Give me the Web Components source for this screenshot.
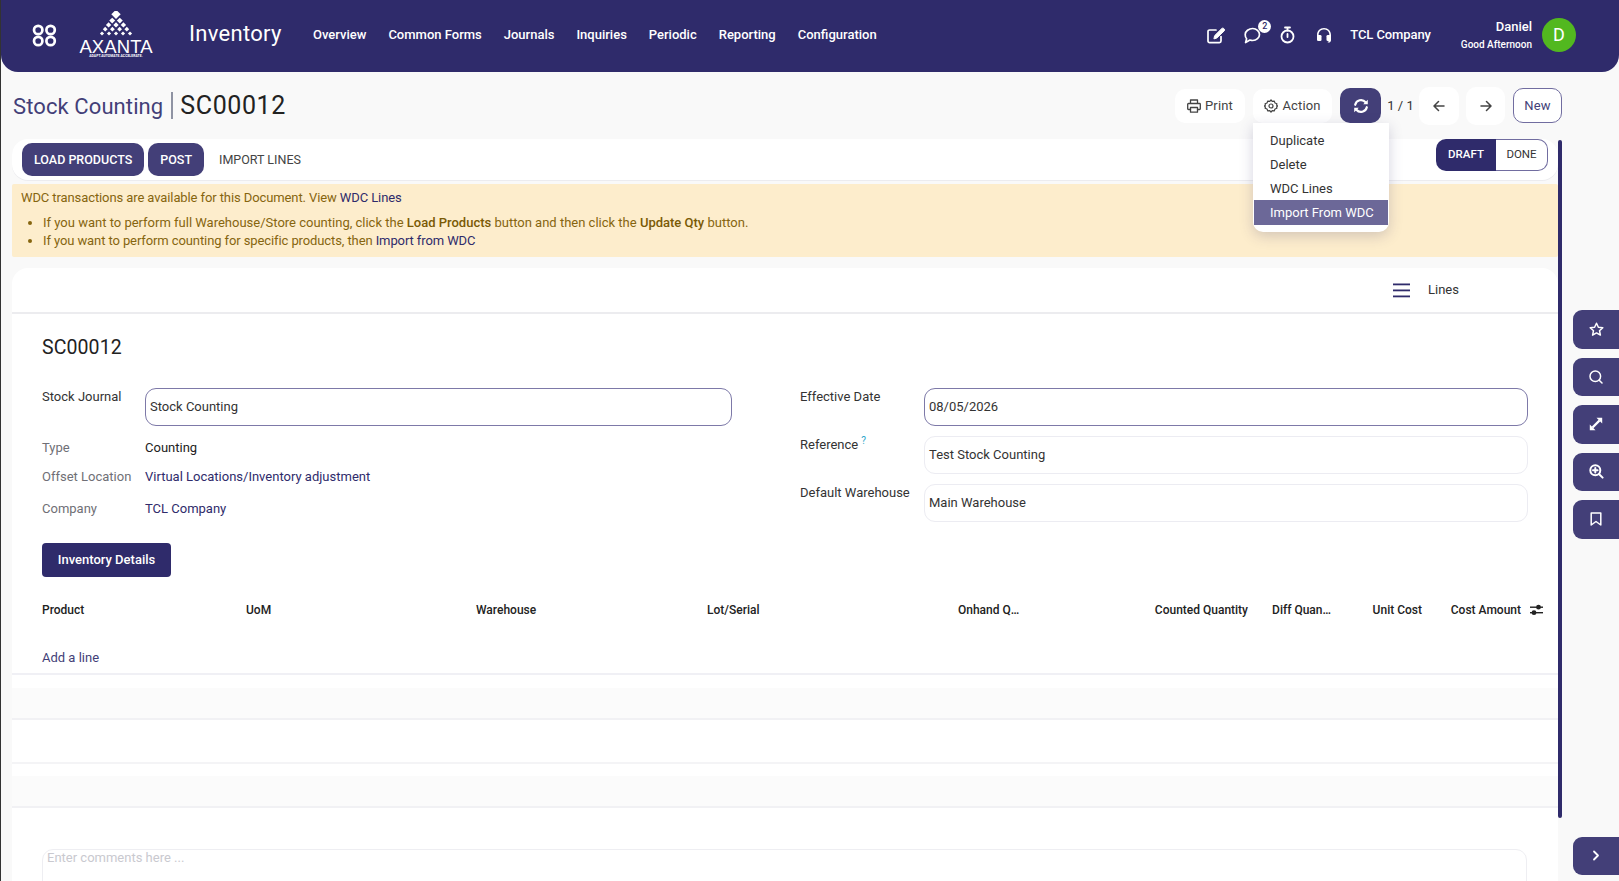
<!DOCTYPE html>
<html lang="en"><head><meta charset="utf-8"><title>Stock Counting</title>
<style>
html,body{margin:0;height:881px;overflow:hidden;background:#f9f9f9}
body{border-left:1px solid #333;font:13px/1.2 Roboto,"Liberation Sans",sans-serif;color:#222;box-sizing:border-box;width:1619px}
stock-app{display:block}
</style></head><body>
<stock-app></stock-app>
<script>
const S='fill="none" stroke="currentColor" stroke-linecap="round" stroke-linejoin="round"';
const icons={
apps:`<svg width="25" height="23" viewBox="0 0 25 23" fill="none" stroke="#fff" stroke-width="2.7"><circle cx="6.2" cy="6" r="4.2"/><circle cx="18.6" cy="6" r="4.2"/><circle cx="6.2" cy="17" r="4.2"/><circle cx="18.6" cy="17" r="4.2"/></svg>`,
edit:`<svg width="19" height="17" viewBox="0 0 19 17" ${S} stroke-width="1.7"><path d="M14 9.500V14a1.600 1.600 0 0 1-1.600 1.600H2.600A1.600 1.600 0 0 1 1 14V4.600A1.600 1.600 0 0 1 2.600 3H9"/><path d="M7 11.500l.6-2.800L14.800 1.500c.6-.5 1.400-.5 1.900 0l.5.5c.5.6.5 1.300 0 1.900l-7.300 7z" fill="currentColor" stroke-width="1"/></svg>`,
chat:`<svg width="17" height="17" viewBox="0 0 17 17" ${S} stroke-width="1.7"><path d="M8.700 1.500c3.800 0 6.800 2.700 6.800 6s-3 6-6.800 6c-1 0-1.900-.2-2.800-.5L1.600 15.500l1-3.700C1.600 10.700 1.200 9.200 1.200 7.500c0-3.300 3.700-6 7.500-6z"/></svg>`,
timer:`<svg width="15" height="18" viewBox="0 0 15 18" ${S} stroke-width="1.800"><circle cx="7.500" cy="10.500" r="6"/><path d="M5 1.500h5M7.500 1.500v3M7.500 8v3"/></svg>`,
head:`<svg width="16" height="16" viewBox="0 0 16 16"><path d="M8 1C3.800 1 1 4 1 8v3h1.600V8c0-3.200 2.200-5.400 5.400-5.400S13.400 4.800 13.400 8v3H15V8c0-4-2.800-7-7-7z" fill="currentColor"/><rect x="1" y="8" width="4.500" height="6" rx="1.300" fill="currentColor"/><rect x="10.500" y="8" width="4.500" height="6" rx="1.300" fill="currentColor"/><path d="M14.300 13c0 1.300-.8 2-2 2" ${S} stroke-width="1.200"/></svg>`,
print:`<svg width="14" height="14" viewBox="0 0 14 14" ${S} stroke-width="1.300"><path d="M3.500 4.500V1h7v3.500M3.500 10.500H1.500a.8.8 0 0 1-.8-.8V5.300a.8.8 0 0 1 .8-.8h11a.8.8 0 0 1 .8.8v4.400a.8.8 0 0 1-.8.8h-2"/><rect x="3.500" y="8.500" width="7" height="4.700"/></svg>`,
gear:`<svg width="14" height="14" viewBox="0 0 14 14" ${S} stroke-width="1.200"><circle cx="7" cy="7" r="2"/><path d="M7 .8l1.200 1.600 2-.3.8 1.900 1.900.8-.3 1.200.9 1-.9 1 .3 1.200-1.900.8-.8 1.900-2-.3L7 13.200l-1.200-1.600-2 .3-.8-1.900-1.900-.8.3-1.200-.9-1 .9-1-.3-1.200 1.900-.8.8-1.900 2 .3z"/></svg>`,
sync:`<svg width="16" height="16" viewBox="0 0 16 16"><path d="M2.200 6.800A6 6 0 0 1 12.600 4.200" ${S} stroke-width="2.200" stroke-linecap="butt"/><path d="M13.800 9.200A6 6 0 0 1 3.400 11.800" ${S} stroke-width="2.200" stroke-linecap="butt"/><path d="M10.200 6.300L14.800 6.300 14.800 1.700zM5.800 9.700L1.200 9.700 1.200 14.300z" fill="currentColor"/></svg>`,
left:`<svg width="12" height="12" viewBox="0 0 12 12" ${S} stroke-width="1.500"><path d="M11 6H1.200M5.500 1.500L1 6l4.500 4.500"/></svg>`,
right:`<svg width="12" height="12" viewBox="0 0 12 12" ${S} stroke-width="1.500"><path d="M1 6h9.800M6.500 1.500L11 6l-4.500 4.500"/></svg>`,
bars:`<svg width="17" height="15" viewBox="0 0 17 15" fill="#2f2b6b"><rect width="17" height="1.800" y=".5"/><rect width="17" height="1.800" y="6.500"/><rect width="17" height="1.800" y="12.500"/></svg>`,
sliders:`<svg width="13" height="12" viewBox="0 0 13 12" fill="#222"><rect y="2.500" width="13" height="1.400"/><rect y="8" width="13" height="1.400"/><circle cx="8.500" cy="3.200" r="2.400"/><circle cx="4" cy="8.700" r="2.400"/></svg>`,
star:`<svg width="15" height="15" viewBox="0 0 15 15" ${S} stroke-width="1.500"><path d="M7.500 1.200l1.900 4 4.400.5-3.300 3 .9 4.400-3.900-2.200-3.900 2.200.9-4.400-3.300-3 4.400-.5z"/></svg>`,
search:`<svg width="14" height="14" viewBox="0 0 14 14" ${S} stroke-width="1.500"><circle cx="6.300" cy="6.300" r="5.300"/><path d="M10.200 10.200l2.800 2.800"/></svg>`,
expand:`<svg width="14" height="14" viewBox="0 0 14 14"><path d="M3.500 10.500L10.500 3.500" stroke="currentColor" stroke-width="2.400"/><path d="M7.500 .8h5.700v5.700zM6.500 13.200H.8V7.500z" fill="currentColor"/></svg>`,
zoom:`<svg width="15" height="15" viewBox="0 0 15 15" ${S} stroke-width="2"><circle cx="6.300" cy="6.300" r="5"/><path d="M10.200 10.200l3.400 3.400M6.300 4v4.600M4 6.300h4.600" /></svg>`,
mark:`<svg width="12" height="14" viewBox="0 0 12 14" ${S} stroke-width="1.500"><path d="M1.200 1h9.600v12L6 9.500 1.200 13z"/></svg>`,
chev:`<svg width="8" height="11" viewBox="0 0 8 11" ${S} stroke-width="1.800"><path d="M2 1.500l4 4-4 4"/></svg>`
};
function diamonds(){
 const c=30;
 let o=`<rect x="${c-3.3}" y="0" width="6.600" height="6.600" transform="rotate(45 ${c} 3.300)"/>`;
 const rows=[[2,7.500,4.200,7.600],[3,12,3.800,7.400],[4,16.500,3.400,7.200],[5,21,3,7]];
 rows.forEach(([n,y,s,d])=>{for(let i=0;i<n;i++){const x=c-((n-1)*d)/2+i*d;o+=`<rect x="${x-s/2}" y="${y}" width="${s}" height="${s}" transform="rotate(45 ${x} ${y+s/2})"/>`;}});
 return `<svg width="60" height="27" viewBox="0 0 60 27" fill="#fff" style="display:block">${o}</svg>`;
}
function def(name,css,html){
 customElements.define(name,class extends HTMLElement{
  constructor(){super();const r=this.attachShadow({mode:'open'});r.innerHTML=`<style>${css}</style>${html}`;}
 });
}
def('axanta-logo',`:host{display:flex;flex-direction:column;align-items:center;width:74px;color:#fff;margin:-1px 0 0 0}
.n{font:400 18.500px/15px "Liberation Sans",Arial,sans-serif;letter-spacing:.1px;margin-top:1px;white-space:nowrap}
.t{font:700 3.400px/4px Roboto,sans-serif;letter-spacing:.05px;white-space:nowrap}`,
`${diamonds()}<div class="n">AXANTA</div><div class="t">ADAPT.AUTOMATE.ACCELERATE.</div>`);

def('app-header',`:host{display:flex;align-items:center;height:72px;background:#2f2b6b;color:#fff;border-radius:0 0 17px 17px;padding:0 43px 2px 31px;box-sizing:border-box;white-space:nowrap}
svg{display:block}
.apps{display:flex;margin-right:22px}
.mod{font-size:22px;margin-left:36px;width:124px;letter-spacing:.3px;line-height:1;margin-top:-3px}
nav{display:flex;gap:22px;font-size:13px;font-weight:500}
.r{margin-left:auto;display:flex;align-items:center}
.ic{display:flex;position:relative}
.b{position:absolute;right:-10px;top:-7px;width:13px;height:13px;border-radius:50%;background:#fff;color:#2f2b6b;font:500 9px/13px Roboto,sans-serif;text-align:center}
.co{font-weight:500;margin-left:18px;letter-spacing:-.1px}
.u{margin-left:30px;text-align:right}
.u b{display:block;font-weight:500;font-size:13px;line-height:16px}
.u small{display:block;font-size:10px;font-weight:500;line-height:15px;margin-top:2px}
.av{width:34px;height:34px;border-radius:50%;background:#52b81f;margin-left:10px;font-size:18px;line-height:34px;text-align:center}`,
`<span class="apps">${icons.apps}</span><axanta-logo></axanta-logo><span class="mod">Inventory</span>
<nav><span>Overview</span><span>Common Forms</span><span>Journals</span><span>Inquiries</span><span>Periodic</span><span>Reporting</span><span>Configuration</span></nav>
<div class="r"><span class="ic">${icons.edit}</span><span class="ic" style="margin-left:18px">${icons.chat}<span class="b">2</span></span><span class="ic" style="margin-left:19px">${icons.timer}</span><span class="ic" style="margin-left:21px">${icons.head}</span><span class="co">TCL Company</span><div class="u"><b>Daniel</b><small>Good Afternoon</small></div><div class="av">D</div></div>`);

def('tool-btn',`:host{display:flex;align-items:center;justify-content:center;gap:4px;background:#fff;border-radius:10px;color:#444;font-size:13px;letter-spacing:.15px;box-sizing:border-box;white-space:nowrap}
:host([dark]){background:#433f78;color:#fff}
:host([outline]){border:1.500px solid #716da0;color:#433f78}
::slotted(svg){display:block}`,`<slot></slot>`);

def('action-menu',`:host{position:absolute;left:1252px;top:123px;width:136px;height:109px;background:#fff;border-radius:0 0 10px 10px;box-shadow:0 4px 14px rgba(60,55,110,.22);font-size:13px;color:#333;z-index:5;padding-top:6px;box-sizing:border-box}
div{height:24px;line-height:24px;padding-left:17px}
.a{background:#6c6898;color:#fff;height:25px;line-height:25px;margin:-1px 1px 0;padding-left:16px}`,
`<div>Duplicate</div><div>Delete</div><div>WDC Lines</div><div class="a">Import From WDC</div>`);

def('page-control',`:host{display:flex;align-items:center;height:67px;padding:0 57px 0 12px;box-sizing:border-box;white-space:nowrap}
.t{font-size:22px;color:#433f78;margin-top:3px;letter-spacing:.1px}
.s{width:2px;height:27px;background:#8f93a3;margin:0 7px 0 8px}
.n{font-size:25px;color:#222;letter-spacing:.6px}
.r{margin-left:auto;display:flex;align-items:center}
.pg{width:38px;text-align:center;font-size:13px;color:#333;padding-left:1px;box-sizing:border-box}`,
`<span class="t">Stock Counting</span><span class="s"></span><span class="n">SC00012</span>
<div class="r"><tool-btn style="width:70px;height:34px">${icons.print}Print</tool-btn><tool-btn style="width:79px;height:34px;margin-left:8px">${icons.gear}Action</tool-btn><tool-btn dark style="width:41px;height:35px;margin-left:8px">${icons.sync}</tool-btn><span class="pg">1 / 1</span><tool-btn style="width:40px;height:38px">${icons.left}</tool-btn><tool-btn style="width:39px;height:38px;margin-left:7px">${icons.right}</tool-btn><tool-btn outline style="width:49px;height:35px;margin-left:8px">New</tool-btn></div>`);

def('status-bar',`:host{display:flex;flex:none;align-items:flex-start;height:41px;background:#fff;border-radius:16px;box-shadow:0 1px 0 #ececef;font-size:12.500px;font-weight:500;white-space:nowrap;padding:4px 10px 0 10px;box-sizing:border-box}
.b{display:flex;align-items:center;height:33px;border-radius:10px;background:#433f78;color:#fff;padding:0 12px;margin-right:4px}
.l{display:flex;align-items:center;height:33px;color:#444;margin-left:11px;font-weight:400}
.st{margin:-4px 0 0 auto;display:flex;height:32px;box-sizing:border-box;font-size:11.500px}
.st span{display:flex;align-items:center;justify-content:center;box-sizing:border-box}
.d{width:60px;background:#2f2b6b;color:#fff;border-radius:10px 0 0 10px}
.o{width:52px;color:#333;border:1.500px solid #716da0;border-left:0;border-radius:0 10px 10px 0;font-weight:400}`,
`<span class="b">LOAD PRODUCTS</span><span class="b">POST</span><span class="l">IMPORT LINES</span><div class="st"><span class="d">DRAFT</span><span class="o">DONE</span></div>`);

def('wdc-alert',`:host{display:block;flex:none;height:73px;background:#fdedcc;color:#86650f;font-size:13px;padding:6px 9px;box-sizing:border-box;border-radius:2px;white-space:nowrap}
a{color:#2f2b6b}b{font-weight:500;color:#7a5a05}
ul{margin:8px 0 0;padding:0 0 0 22px}li{height:18px;line-height:18px}p{margin:0;line-height:16px}.tight{letter-spacing:-.1px}`,
`<p class="tight">WDC transactions are available for this Document. View <a>WDC Lines</a></p><ul><li>If you want to perform full Warehouse/Store counting, click the <b>Load Products</b> button and then click the <b>Update Qty</b> button.</li><li class="tight">If you want to perform counting for specific products, then <a>Import from WDC</a></li></ul>`);

def('form-row',`:host{display:grid;grid-template-columns:var(--lw) 1fr;align-items:start;white-space:nowrap}
.l{color:var(--lc,#333)}`,
`<span class="l"><slot name="label"></slot></span><div><slot></slot></div>`);

def('text-box',`:host{display:flex;align-items:center;height:38px;box-sizing:border-box;border:1.500px solid #ececf2;border-radius:11px;padding-left:4px;background:#fff;color:#333}
:host([focus]){border-color:#7d79a8}`,`<slot></slot>`);

def('form-sheet',`:host{display:block;flex:none;background:#fff;border-radius:16px 16px 0 0;height:613px;--lw:103px}
.tabs{display:flex;align-items:center;height:46px;border-bottom:2px solid #ececef;box-sizing:border-box;padding:0 100px 0 0;justify-content:flex-end;gap:18px;color:#333}
.tabs svg{display:block}
.body{padding:0 31px 0 30px}
h2{font-size:19.500px;font-weight:400;margin:0;padding-top:22px;line-height:23px;color:#222;height:52px;box-sizing:content-box;letter-spacing:.1px}
.f{display:grid;grid-template-columns:690px 727px;column-gap:68px;height:155px}
.f>div{display:flex;flex-direction:column}
.v{line-height:16px}
a{color:#2f2b6b}
sup{color:#2aa6c9;font-size:10px;line-height:0;margin-left:3px}
.btn{display:block;width:129px;height:34px;line-height:33px;background:#2f2b6b;color:#fff;text-align:center;border-radius:4px;font-weight:500}
.tb{margin:0 -31px 0 -30px}
.hd{display:grid;grid-template-columns:204px 230px 231px 251px 100px 190px 83px 91px 121px;height:26px;margin-top:20px;align-items:center;padding:0 15px 0 30px;font-size:12px;font-weight:500;color:#222;white-space:nowrap}
.hd .e{text-align:right}
.hd .c{display:flex;align-items:center;justify-content:flex-end;gap:9px}
.add{color:#433f78;padding:27px 30px 7px;line-height:16px;border-bottom:2px solid #f0f0f5}
.band{height:30px;margin-top:13px;background:#fbfbfb;border-bottom:2px solid #f1f1f4}
.plain{height:42px;border-bottom:2px solid #f4f4f6}
.band.b2{margin-top:12px}
.cm{margin-top:41px;width:1485px;height:60px;border:1.500px solid #eeeef2;border-radius:11px;color:#c9c9cf;padding:0 4px;box-sizing:border-box;line-height:16px}`,
`<div class="tabs">${icons.bars}<span style="width:30px">Lines</span></div>
<div class="body"><h2>SC00012</h2>
<div class="f"><div>
<form-row style="margin-bottom:14px"><span slot="label"><span style="display:block;margin-top:1px">Stock Journal</span></span><text-box focus style="width:587px">Stock Counting</text-box></form-row>
<form-row style="--lc:#6f6f76;height:29px"><span slot="label">Type</span><span class="v">Counting</span></form-row>
<form-row style="--lc:#6f6f76;height:32px"><span slot="label">Offset Location</span><a class="v">Virtual Locations/Inventory adjustment</a></form-row>
<form-row style="--lc:#6f6f76"><span slot="label">Company</span><a class="v">TCL Company</a></form-row>
</div><div style="--lw:124px;gap:10px">
<form-row><span slot="label"><span style="display:block;margin-top:1px">Effective Date</span></span><text-box focus style="width:604px">08/05/2026</text-box></form-row>
<form-row><span slot="label"><span style="display:block;margin-top:1px">Reference<sup>?</sup></span></span><text-box style="width:604px">Test Stock Counting</text-box></form-row>
<form-row><span slot="label"><span style="display:block;margin-top:1px">Default Warehouse</span></span><text-box style="width:604px">Main Warehouse</text-box></form-row>
</div></div>
<span class="btn">Inventory Details</span>
<div class="tb">
<div class="hd"><span>Product</span><span>UoM</span><span>Warehouse</span><span>Lot/Serial</span><span>Onhand Q…</span><span class="e">Counted Quantity</span><span class="e">Diff Quan…</span><span class="e">Unit Cost</span><span class="c">Cost Amount ${icons.sliders}</span></div>
<div class="add">Add a line</div><div class="band"></div><div class="plain"></div><div class="band b2"></div>
</div>
<div class="cm">Enter comments here ...</div>
</div>`);

def('side-rail',`:host{display:flex;flex-direction:column;width:46px;margin-left:11px;padding-top:171px;gap:9px;height:736px;box-sizing:border-box}
span{display:flex;align-items:center;justify-content:center;height:38.500px;width:46px;flex:none;background:#433f78;color:#fff;border-radius:9px 0 0 9px}
svg{display:block}
.last{margin-top:auto}`,
`<span>${icons.star}</span><span>${icons.search}</span><span>${icons.expand}</span><span>${icons.zoom}</span><span>${icons.mark}</span><span class="last">${icons.chev}</span>`);

def('stock-app',`:host{display:block;position:relative;height:881px;overflow:hidden}
.w{display:flex;padding-left:11px;height:742px}
.c{display:flex;flex-direction:column;width:1546px;height:742px;overflow:hidden}
wdc-alert{margin-top:4px}
form-sheet{margin-top:11px}
.sb{width:4px;height:678px;margin-top:1px;background:#2f2b6b;border-radius:3px;flex:none}`,
`<app-header></app-header><page-control></page-control>
<div class="w"><div class="c"><status-bar></status-bar><wdc-alert></wdc-alert><form-sheet></form-sheet></div><div class="sb"></div><side-rail></side-rail></div>
<action-menu></action-menu>`);
</script>
</body></html>
